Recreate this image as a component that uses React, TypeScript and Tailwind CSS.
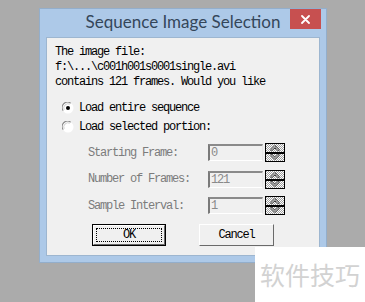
import React from 'react';

const MONO = { fontFamily: '"Liberation Mono", "DejaVu Sans Mono", monospace' };

function Radio({ checked }: { checked?: boolean }) {
  return (
    <svg width="12" height="12" viewBox="0 0 12 12" aria-hidden="true">
      <circle cx="6" cy="6" r="5.5" fill="#ffffff" />
      <path d="M1.2 8.6 A5.3 5.3 0 0 1 8.6 1.2" stroke="#8a8a8a" strokeWidth="1.1" fill="none" />
      <path d="M2.2 7.8 A4.2 4.2 0 0 1 7.8 2.2" stroke="#d0d0d0" strokeWidth="1" fill="none" />
      {checked && <circle cx="6" cy="6" r="2" fill="#000" />}
    </svg>
  );
}

function Spin() {
  return (
    <svg width="20" height="19" viewBox="0 0 20 19" aria-hidden="true" shapeRendering="crispEdges">
      <defs>
        <pattern id="dith" width="2" height="2" patternUnits="userSpaceOnUse">
          <rect width="2" height="2" fill="#ffffff" />
          <rect width="1" height="1" fill="#a0a0a0" />
          <rect x="1" y="1" width="1" height="1" fill="#a0a0a0" />
        </pattern>
      </defs>
      <rect x="0.5" y="0.5" width="19" height="8.5" fill="url(#dith)" stroke="#000" />
      <rect x="0.5" y="10" width="19" height="8.5" fill="url(#dith)" stroke="#000" />
      <g shapeRendering="auto" strokeLinecap="round" strokeLinejoin="round">
        <polyline points="6.5,7 10,3.5 13.5,7" fill="none" stroke="#3a3a3a" strokeWidth="2.4" />
        <polyline points="6.5,7 10,3.5 13.5,7" fill="none" stroke="#ffffff" strokeWidth="1" />
        <polyline points="6.5,12 10,15.5 13.5,12" fill="none" stroke="#3a3a3a" strokeWidth="2.4" />
        <polyline points="6.5,12 10,15.5 13.5,12" fill="none" stroke="#ffffff" strokeWidth="1" />
      </g>
    </svg>
  );
}

const FIELDS = [
  { label: 'Starting Frame:', value: '0' },
  { label: 'Number of Frames:', value: '121' },
  { label: 'Sample Interval:', value: '1' },
];

export default function App() {
  return (
    <div className="relative w-[365px] h-[302px] overflow-hidden bg-[#ababab] pt-[8px] pl-[39px]">
      {/* Window */}
      <div className="w-[288px] h-[255px] border border-[#93aecb] bg-[#adc9e8] flex flex-col px-[6px] pb-[6px]">
        {/* Title bar */}
        <div className="h-[28px] grid grid-cols-[1fr_auto_1fr] items-start">
          <div />
          <span
            className="text-[17px] leading-[26px] text-[#34465a] whitespace-nowrap"
            style={{ fontFamily: 'Lato, "Open Sans", sans-serif' }}
          >
            Sequence Image Selection
          </span>
          <div className="flex justify-end">
            <div className="w-[31px] h-[20px] mr-[-1px] bg-[#c75050] flex items-center justify-center">
              <svg width="9" height="9" viewBox="0 0 9 9" aria-hidden="true">
                <path d="M1 1 L8 8 M8 1 L1 8" stroke="#fff" strokeWidth="1.8" strokeLinecap="round" />
              </svg>
            </div>
          </div>
        </div>

        {/* Client area */}
        <div
          className="flex-1 bg-[#f0f0f0] border border-[#9db6d0] flex flex-col text-[12px] tracking-[-1.2px] text-black"
          style={MONO}
        >
          <div className="pl-[8px] pt-[7px] leading-[15px]">
            <div>The image file:</div>
            <div>f:\...\c001h001s0001single.avi</div>
            <div>contains 121 frames. Would you like</div>
          </div>

          <div className="mt-[8px] pl-[15px] flex flex-col">
            <div className="h-[19px] flex items-center gap-[5px]">
              <Radio checked />
              <span>Load entire sequence</span>
            </div>
            <div className="h-[19px] flex items-center gap-[5px]">
              <Radio />
              <span>Load selected portion:</span>
            </div>
          </div>

          <div className="mt-[7px] pl-[41px] grid grid-cols-[118px_55px_20px] gap-x-[2px] gap-y-[7.5px] items-center">
            {FIELDS.map(f => (
              <React.Fragment key={f.label}>
                <span className="text-[#7c7c7c]">{f.label}</span>
                <div className="h-[17px] border-t-2 border-l-2 border-t-[#8a8a8a] border-l-[#7a7a7a] border-b border-r border-b-[#ffffff] border-r-[#e6e6e6] pl-[1px] leading-[14px] text-[#8a8a8a]">
                  {f.value}
                </div>
                <Spin />
              </React.Fragment>
            ))}
          </div>

          <div className="mt-[9px] pl-[45px] flex gap-[33px]">
            <div className="w-[74px] h-[22px] border border-black bg-[#f0f0f0] flex">
              <div className="flex-1 border border-t-white border-l-white border-b-[#6a6a6a] border-r-[#6a6a6a] p-[2px] flex">
                <div className="flex-1 border border-dotted border-black flex items-center justify-center leading-none">
                  OK
                </div>
              </div>
            </div>
            <div className="w-[75px] h-[22px] border border-t-white border-l-white border-b-[#6a6a6a] border-r-[#6a6a6a] flex items-center justify-center leading-none">
              Cancel
            </div>
          </div>
        </div>
      </div>

      {/* Watermark */}
      <div className="absolute left-[255px] top-[247px] w-[110px] h-[55px] bg-white flex items-center pl-[5px]">
        <span
          className="text-[25px] leading-none text-[#d2d2d2]"
          style={{ fontFamily: '"Noto Sans CJK SC", sans-serif' }}
        >
          软件技巧
        </span>
      </div>
    </div>
  );
}
